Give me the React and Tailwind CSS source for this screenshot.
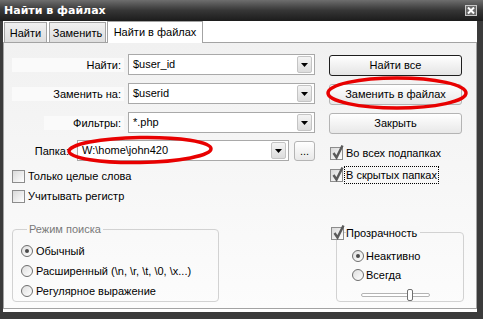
import React from 'react';

function Check({ checked }) {
  return (
    <span className="relative w-[13px] h-[13px] shrink-0 border border-[#8c8c8c] bg-gradient-to-br from-[#d9d9d9] to-white">
      {checked && (
        <svg className="absolute -top-[4px] left-[1px]" width="12" height="16" viewBox="0 0 12 16">
          <path d="M1.5 9 L4.5 13.5 L10.5 1.5" stroke="#5a5a5a" strokeWidth="2.4" fill="none" />
        </svg>
      )}
    </span>
  );
}

function Radio({ on }) {
  return (
    <span className="w-[12px] h-[12px] shrink-0 rounded-full border border-[#6e6e6e] bg-gradient-to-br from-[#dedede] to-white flex items-center justify-center">
      {on && <span className="w-[4px] h-[4px] rounded-full bg-[#4a4a4a]" />}
    </span>
  );
}

function Arrow() {
  return (
    <span className="w-[15px] h-[17px] mr-[2px] shrink-0 border border-[#c4c4c4] rounded-[2px] bg-gradient-to-b from-[#f4f4f4] to-[#dcdcdc] flex items-center justify-center">
      <svg width="7" height="4" viewBox="0 0 7 4">
        <path d="M0 0 H7 L3.5 4 Z" fill="#000" />
      </svg>
    </span>
  );
}

function Combo({ value, width }) {
  return (
    <div className={`flex items-center h-[21px] bg-white border border-[#a9a9a9] ${width}`}>
      <span className="flex-1 pl-[4px] leading-[13px]">{value}</span>
      <Arrow />
    </div>
  );
}

function Button({ children, primary }) {
  return (
    <div
      className={
        primary
          ? 'w-[133px] h-[21px] rounded-[3px] border border-[#1e1e1e] bg-gradient-to-b from-white to-[#e4e4e4] flex items-center justify-center'
          : 'w-[133px] h-[21px] rounded-[3px] border border-[#b4b4b4] bg-gradient-to-b from-white to-[#e8e8e8] flex items-center justify-center'
      }
    >
      {children}
    </div>
  );
}

function FieldRow({ label, value, labelW }) {
  return (
    <div className="flex items-center">
      <div className="w-[112px] flex justify-end">
        <span className={`bg-[#fafafa] text-right pr-[3px] leading-[14px] ${labelW}`}>{label}</span>
      </div>
      <div className="ml-[4px]">
        <Combo value={value} width="w-[187px]" />
      </div>
    </div>
  );
}

export default function App() {
  return (
    <div className="relative w-[483px] h-[319px] bg-[#3b3b3b] font-['Liberation_Sans',Arial,sans-serif] text-[11px] text-black overflow-hidden">
      {/* title bar */}
      <div className="h-[21px] bg-gradient-to-b from-[#6e6e6e] via-[#363636] to-[#1c1c1c] flex items-center justify-between pl-[4px] pr-[6px]">
        <span className="font-['DejaVu_Sans',sans-serif] font-bold text-[11px] text-white leading-[14px] mt-[1px]">
          Найти в файлах
        </span>
        <span className="w-[12px] h-[11px] border border-[#c8c8c8] bg-[#6a6a6a] flex items-center justify-center">
          <svg width="8" height="7" viewBox="0 0 8 7">
            <path d="M1 0.5 L7 6.5 M7 0.5 L1 6.5" stroke="#fff" strokeWidth="2" />
          </svg>
        </span>
      </div>

      {/* body */}
      <div className="ml-[3px] w-[474px] h-[291px] bg-white flex flex-col">
        {/* tabs */}
        <div className="h-[21px] flex items-end pl-[1px] gap-[2px]">
          <div className="w-[43px] h-[20px] border border-b-0 border-[#a3a3a3] bg-gradient-to-b from-[#f0f0f0] to-[#dedede] flex items-center justify-center leading-[13px] pt-[2px]">
            Найти
          </div>
          <div className="w-[57px] h-[20px] border border-b-0 border-[#a3a3a3] bg-gradient-to-b from-[#f0f0f0] to-[#dedede] flex items-center justify-center leading-[13px] pt-[2px]">
            Заменить
          </div>
          <div className="relative z-10 -ml-[1px] w-[96px] h-[22px] -mb-[1px] border border-b-0 border-[#a3a3a3] bg-white flex items-center justify-center leading-[13px]">
            Найти в файлах
          </div>
        </div>

        {/* panel */}
        <div className="h-[267px] border border-[#a3a3a3] bg-gradient-to-b from-[#f1f1f1] to-[#fcfcfc] flex flex-col">
          <div className="flex">
            {/* left column */}
            <div className="pl-[8px] pt-[11px] flex flex-col">
              <div className="flex flex-col gap-[8px]">
                <FieldRow label="Найти:" value="$user_id" labelW="w-[112px]" />
                <FieldRow label="Заменить на:" value="$userid" labelW="w-[112px]" />
                <FieldRow label="Фильтры:" value="*.php" labelW="w-[80px]" />
              </div>
              <div className="mt-[7px] flex items-center">
                <span className="w-[61px] text-right pr-[4px] leading-[14px]">Папка:</span>
                <div className="ml-[4px]">
                  <Combo value="W:\home\john420" width="w-[212px]" />
                </div>
                <div className="ml-[5px] w-[21px] h-[20px] rounded-[3px] border border-[#b4b4b4] bg-gradient-to-b from-white to-[#e8e8e8] flex items-end justify-center leading-[13px] pb-[2px]">
                  ...
                </div>
              </div>
              <div className="mt-[7px] h-[16px] flex items-center gap-[3px]">
                <Check />
                <span className="leading-[14px]">Только целые слова</span>
              </div>
              <div className="mt-[4px] h-[16px] flex items-center gap-[3px]">
                <Check />
                <span className="leading-[14px]">Учитывать регистр</span>
              </div>
            </div>

            {/* right column */}
            <div className="ml-[14px] pt-[12px] flex flex-col">
              <div className="flex flex-col gap-[8px]">
                <Button primary>Найти все</Button>
                <Button>Заменить в файлах</Button>
                <Button>Закрыть</Button>
              </div>
              <div className="mt-[11px] ml-[1px] h-[16px] flex items-center gap-[3px]">
                <Check checked />
                <span className="leading-[14px]">Во всех подпапках</span>
              </div>
              <div className="mt-[6px] ml-[1px] h-[16px] flex items-center gap-[1px]">
                <Check checked />
                <span className="leading-[14px] border border-dotted border-black px-[1px] py-[1px]">В скрытых папках</span>
              </div>
            </div>
          </div>

          {/* bottom groups */}
          <div className="mt-[19px] flex items-start">
            <fieldset className="ml-[8px] w-[207px] h-[79px] border border-[#d2d2d2] rounded-[4px] pl-[8px]">
              <legend className="ml-[6px] px-[2px] text-[#7a7a7a] leading-[13px]">Режим поиска</legend>
              <div className="mt-[5px] flex flex-col">
                <div className="h-[20px] flex items-center gap-[3px]">
                  <Radio on />
                  <span className="leading-[14px]">Обычный</span>
                </div>
                <div className="h-[20px] flex items-center gap-[3px]">
                  <Radio />
                  <span className="leading-[14px]">{'Расширенный (\\n, \\r, \\t, \\0, \\x...)'}</span>
                </div>
                <div className="h-[20px] flex items-center gap-[3px]">
                  <Radio />
                  <span className="leading-[14px]">Регулярное выражение</span>
                </div>
              </div>
            </fieldset>

            <div className="ml-[112px] mt-[3px] flex flex-col">
              <div className="relative z-10 h-[14px] flex items-center gap-[2px]">
                <Check checked />
                <span className="bg-[#f8f8f8] pr-[3px] leading-[14px]">Прозрачность</span>
              </div>
              <div className="-mt-[8px] ml-[5px] w-[128px] h-[70px] border border-[#d2d2d2] rounded-[4px] pl-[15px] pt-[13px] flex flex-col">
                <div className="h-[20px] flex items-center gap-[2px]">
                  <Radio on />
                  <span className="leading-[14px]">Неактивно</span>
                </div>
                <div className="h-[20px] flex items-center gap-[2px]">
                  <Radio />
                  <span className="leading-[14px]">Всегда</span>
                </div>
                <div className="relative mt-[4px] ml-[9px] w-[69px] h-[12px] flex items-center">
                  <div className="w-full h-[4px] rounded-full border border-[#b4b4b4] bg-white" />
                  <div className="absolute left-[46px] top-0 w-[6px] h-[12px] rounded-[2px] border border-[#707070] bg-white" />
                </div>
              </div>
            </div>
          </div>
        </div>
      </div>

      {/* red marks */}
      <svg className="absolute inset-0 pointer-events-none" width="483" height="319" viewBox="0 0 483 319">
        <ellipse cx="397" cy="93" rx="69" ry="15" fill="none" stroke="#e80000" strokeWidth="3.5" />
        <ellipse cx="140" cy="150" rx="71" ry="12.5" fill="none" stroke="#e80000" strokeWidth="3.5" transform="rotate(-1 140 150)" />
      </svg>
    </div>
  );
}
